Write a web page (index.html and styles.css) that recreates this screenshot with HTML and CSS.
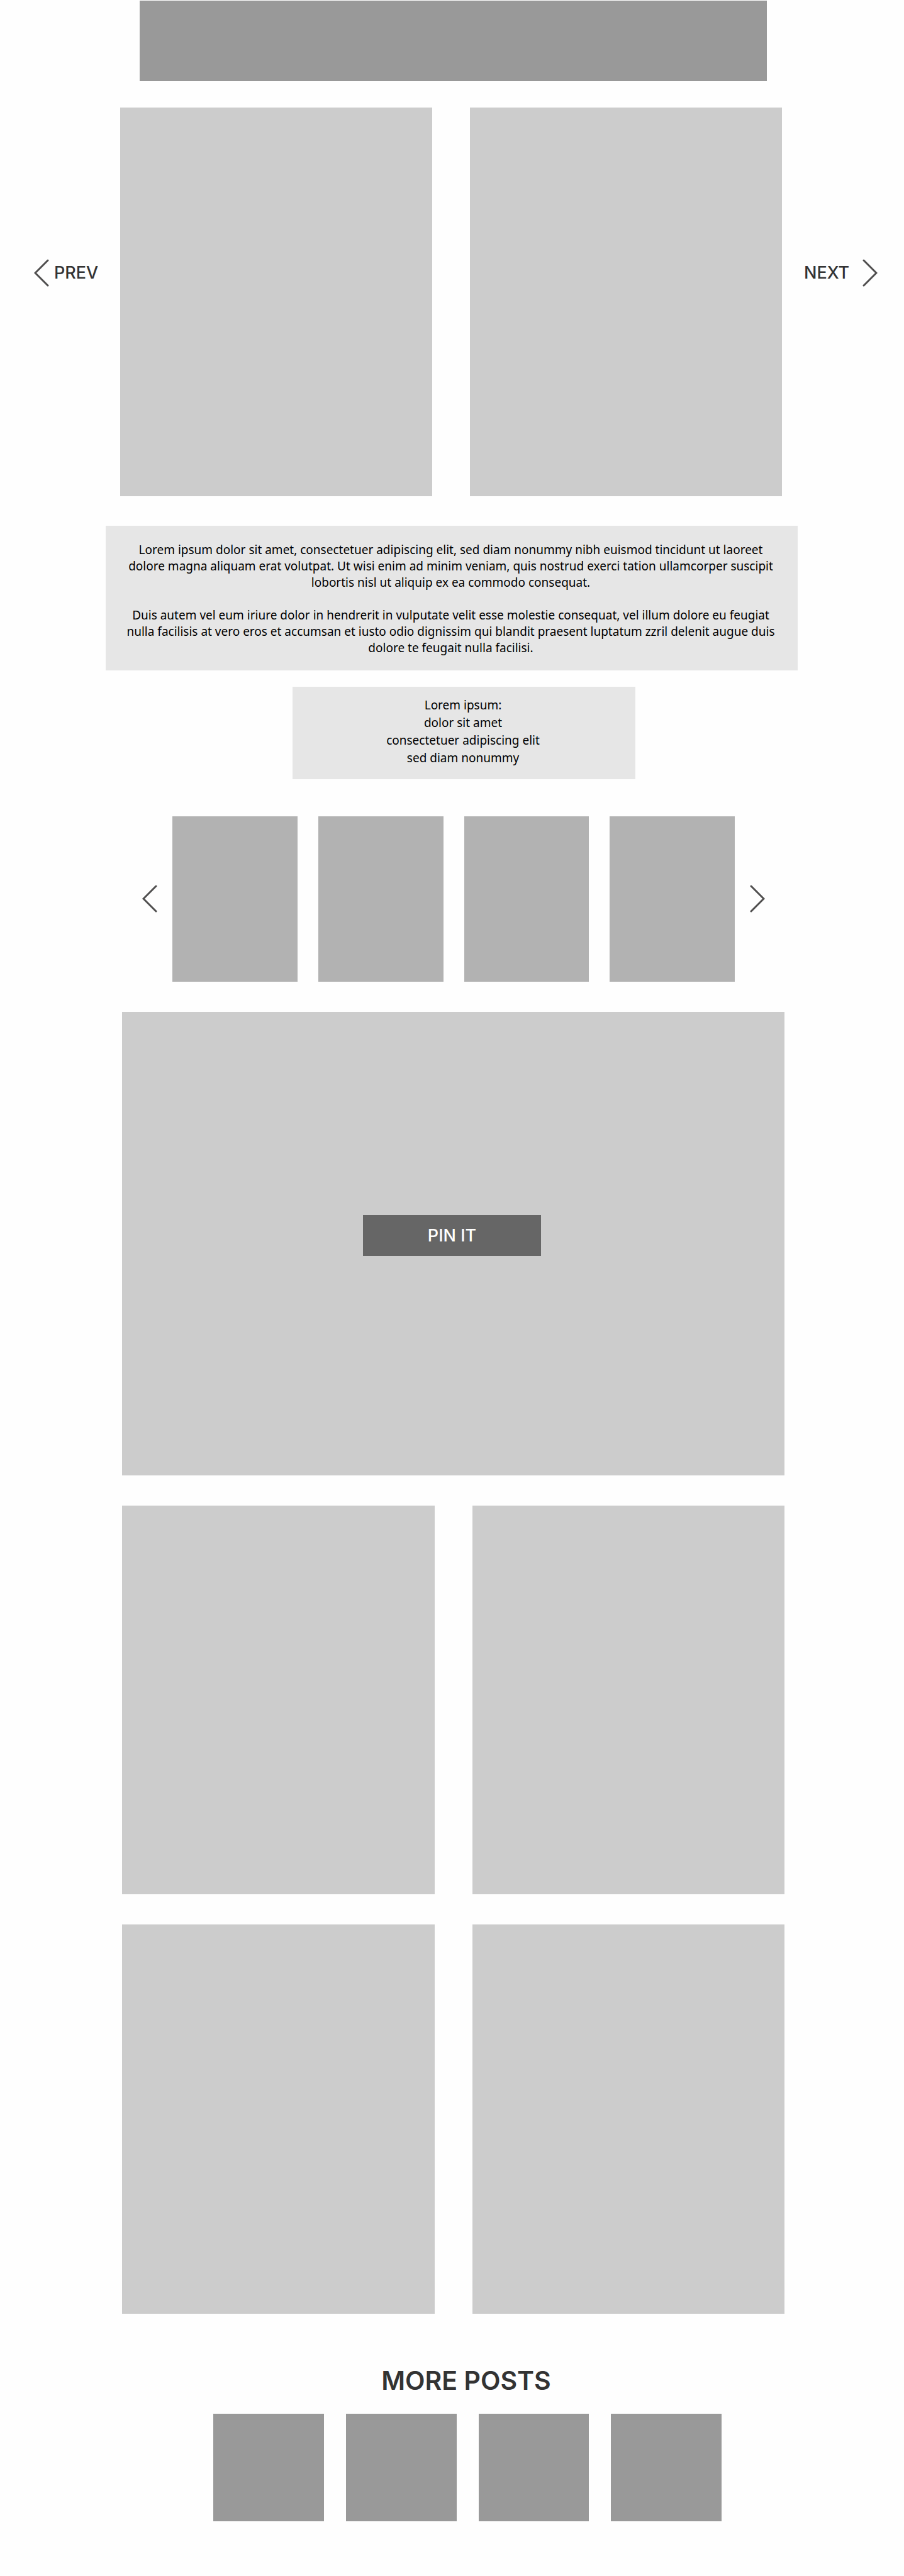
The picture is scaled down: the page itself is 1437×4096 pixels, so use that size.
FILE: index.html
```html
<!DOCTYPE html>
<html lang="en">
<head>
<meta charset="utf-8">
<meta name="viewport" content="width=device-width, initial-scale=1">
<title>Post</title>
<link rel="stylesheet" href="styles.css">
</head>
<body>
<header class="banner"></header>
<main>
  <section class="hero">
    <a class="pager pager-prev" href="#prev">
      <svg class="chevron" viewBox="0 0 24 44" aria-hidden="true"><path d="M22 2 2 22 22 42"/></svg>
      <span>PREV</span>
    </a>
    <div class="pair">
      <div class="photo"></div>
      <div class="photo"></div>
    </div>
    <a class="pager pager-next" href="#next">
      <span>NEXT</span>
      <svg class="chevron" viewBox="0 0 24 44" aria-hidden="true"><path d="M2 2 22 22 2 42"/></svg>
    </a>
  </section>

  <section class="intro">
    <p>Lorem ipsum dolor sit amet, consectetuer adipiscing elit, sed diam nonummy nibh euismod tincidunt ut laoreet<br>
    dolore magna aliquam erat volutpat. Ut wisi enim ad minim veniam, quis nostrud exerci tation ullamcorper suscipit<br>
    lobortis nisl ut aliquip ex ea commodo consequat.</p>
    <p>Duis autem vel eum iriure dolor in hendrerit in vulputate velit esse molestie consequat, vel illum dolore eu feugiat<br>
    nulla facilisis at vero eros et accumsan et iusto odio dignissim qui blandit praesent luptatum zzril delenit augue duis<br>
    dolore te feugait nulla facilisi.</p>
  </section>

  <section class="credits">
    <p>Lorem ipsum:<br>dolor sit amet<br>consectetuer adipiscing elit<br>sed diam nonummy</p>
  </section>

  <section class="carousel">
    <button class="arrow" type="button" aria-label="Previous">
      <svg class="chevron" viewBox="0 0 24 44" aria-hidden="true"><path d="M22 2 2 22 22 42"/></svg>
    </button>
    <div class="thumbs">
      <div class="thumb"></div>
      <div class="thumb"></div>
      <div class="thumb"></div>
      <div class="thumb"></div>
    </div>
    <button class="arrow" type="button" aria-label="Next">
      <svg class="chevron" viewBox="0 0 24 44" aria-hidden="true"><path d="M2 2 22 22 2 42"/></svg>
    </button>
  </section>

  <section class="gallery">
    <div class="feature"><button class="pin" type="button">PIN IT</button></div>
    <div class="pair">
      <div class="photo"></div>
      <div class="photo"></div>
    </div>
    <div class="pair">
      <div class="photo"></div>
      <div class="photo"></div>
    </div>
  </section>

  <section class="more">
    <h2>MORE POSTS</h2>
    <div class="posts">
      <a class="post" href="#post-1" aria-label="Post 1"></a>
      <a class="post" href="#post-2" aria-label="Post 2"></a>
      <a class="post" href="#post-3" aria-label="Post 3"></a>
      <a class="post" href="#post-4" aria-label="Post 4"></a>
    </div>
  </section>
</main>
</body>
</html>
```
FILE: styles.css
```css
* { box-sizing: border-box; }

body {
  margin: 0;
  padding-top: 1px;
  background: #fefefe;
  color: #000;
  font-family: "Noto Sans", sans-serif;
}

p, h2 { margin: 0; }

.banner {
  height: 128px;
  margin: 0 218px 0 222px;
  background: #999;
}

.chevron {
  display: block;
  flex: none;
  width: 24px;
  height: 44px;
  fill: none;
  stroke: #4f4e4e;
  stroke-width: 3;
  stroke-linecap: round;
}

.pair {
  display: grid;
  grid-template-columns: 1fr 1fr;
  gap: 60px;
}

.photo {
  aspect-ratio: 496 / 618;
  background: #ccc;
}

.hero {
  display: grid;
  grid-template-columns: 191px 1fr 194px;
  align-items: center;
  margin-top: 42px;
}

.pager {
  display: flex;
  align-items: center;
  padding-bottom: 92px;
  color: #333;
  font: 500 27px/44px Inter, sans-serif;
  text-decoration: none;
}

.pager-prev {
  gap: 8px;
  padding-left: 54px;
}

.pager-next {
  justify-content: space-between;
  padding-left: 35px;
  padding-right: 42px;
}

.intro,
.credits {
  background: #e6e6e6;
  font-size: 19px;
  text-align: center;
}

.intro {
  display: grid;
  gap: 26px;
  margin: 47px 169px 0 168px;
  padding: 25px 3px 23px 0;
  line-height: 26px;
}

.credits {
  margin: 26px 427px 0 465px;
  padding: 15px 3px 20px 0;
  line-height: 28px;
}

.carousel {
  display: grid;
  grid-template-columns: 24px 1fr 24px;
  align-items: center;
  gap: 24px;
  margin: 59px 221px 0 226px;
}

.arrow {
  padding: 0;
  border: 0;
  background: none;
}

.thumbs {
  display: grid;
  grid-template-columns: repeat(4, 1fr);
  gap: 33px;
}

.thumb {
  aspect-ratio: 199 / 263;
  background: #b2b2b2;
}

.gallery {
  display: grid;
  gap: 48px;
  margin: 48px 190px 0 194px;
}

.feature {
  display: flex;
  align-items: center;
  justify-content: center;
  aspect-ratio: 1053 / 737;
  padding: 0 4px 26px 0;
  background: #ccc;
}

.pin {
  width: 283px;
  padding: 0;
  border: 0;
  background: #666;
  color: #fff;
  font: 500 27px/65px Inter, sans-serif;
}

.more {
  margin: 76px 290px 0 339px;
  padding-bottom: 85px;
}

.more h2 {
  margin-right: 4px;
  color: #333;
  font: 600 41px/60px Inter, sans-serif;
  text-align: center;
}

.posts {
  display: grid;
  grid-template-columns: repeat(4, 1fr);
  gap: 35px;
  margin-top: 23px;
}

.post {
  aspect-ratio: 176 / 171;
  background: #999;
}
```
